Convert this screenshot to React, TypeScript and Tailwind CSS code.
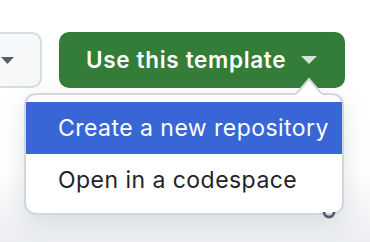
export default function App() {
  return (
    <div
      className="relative h-[242px] w-[370px] overflow-hidden bg-gradient-to-b from-white from-[70%] to-[#eceef1]"
      style={{ fontFamily: "Inter, 'Noto Sans', sans-serif" }}
    >
      {/* button row */}
      <div className="flex items-start pt-[32px]">
        <div className="-ml-[20px] flex h-[56px] w-[62px] items-center justify-end rounded-[10px] border-2 border-[#d8dde3] bg-[#f6f8fa] pr-[26px]">
          <svg width="13" height="7" viewBox="0 0 13 7">
            <path d="M0 0h13L6.5 7z" fill="#57606a" />
          </svg>
        </div>
        <button className="ml-[17px] flex h-[56px] w-[286px] items-center rounded-[10px] bg-[#347d39] pl-[27px] text-[22.5px] font-semibold tracking-[0.03em] text-white">
          <span>Use this template</span>
          <svg className="ml-[15px]" width="16" height="8" viewBox="0 0 16 8">
            <path d="M0 0h16L8 8z" fill="#d3e3d4" />
          </svg>
        </button>
      </div>

      {/* dropdown menu */}
      <div className="absolute left-[24px] top-[93px] w-[320px] rounded-[12px] border-2 border-[#d0d7de] bg-white py-[7px] shadow-[0_8px_24px_rgba(140,149,159,0.25)]">
        <div className="flex h-[52px] items-center bg-[#3866d6] pl-[32px] text-[23px] tracking-[0.02em] text-white">
          Create a new repository
        </div>
        <div className="flex h-[52px] items-center pl-[32px] text-[23px] tracking-[0.02em] text-[#1f2328]">
          Open in a codespace
        </div>
      </div>

      {/* popover arrow */}
      <svg className="absolute left-[296px] top-[77px]" width="26" height="18" viewBox="0 0 26 18">
        <path d="M0 17L13 2L26 17" fill="white" stroke="#d0d7de" strokeWidth="2" />
        <rect x="0" y="17" width="26" height="1" fill="white" />
      </svg>

      {/* peeking icon below the menu */}
      <svg className="absolute left-[322px] top-[212px]" width="14" height="10" viewBox="0 0 14 10">
        <path d="M2 0a5 5 0 0 0 10 0" fill="none" stroke="#57606a" strokeWidth="3" />
      </svg>
    </div>
  );
}
